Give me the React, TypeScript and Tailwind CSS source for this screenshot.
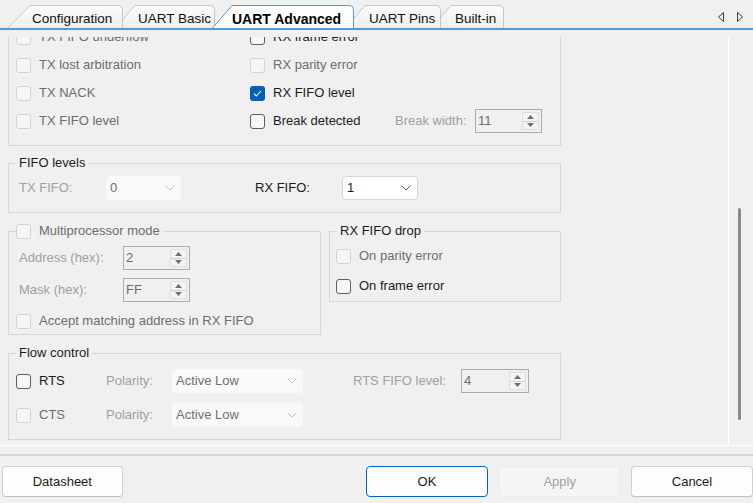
import React from 'react';

type CB = 'on' | 'off' | 'dis';

function Check({ s }: { s: CB }) {
  if (s === 'on') {
    return (
      <span className="flex h-[15px] w-[15px] shrink-0 items-center justify-center rounded-[3px] bg-[#005fb8]">
        <svg width="9" height="7" viewBox="0 0 9 7">
          <path d="M1 3.6 L3.4 6 L8 1" fill="none" stroke="#ffffff" strokeWidth="1.1" />
        </svg>
      </span>
    );
  }
  if (s === 'off') {
    return <span className="h-[15px] w-[15px] shrink-0 rounded-[3px] border border-[#5e5e5e] bg-[#f7f7f7]" />;
  }
  return <span className="h-[15px] w-[15px] shrink-0 rounded-[3px] border border-[#d3d3d3] bg-[#f6f6f6]" />;
}

function CheckLabel({ s, text, cls = '' }: { s: CB; text: string; cls?: string }) {
  return (
    <div className={`flex items-center gap-[8px] ${cls}`}>
      <Check s={s} />
      <span className={s === 'dis' ? 'whitespace-nowrap text-[#6d6d6d]' : 'whitespace-nowrap text-[#1b1b1b]'}>{text}</span>
    </div>
  );
}

function Spin({ v, cls }: { v: string; cls: string }) {
  return (
    <div className={`flex h-[24px] shrink-0 items-stretch border border-[#adadad] ${cls}`}>
      <span className="flex flex-1 items-center pl-[2px] text-[#6d6d6d]">{v}</span>
      <div className="my-[2px] mr-[2px] flex w-[17px] flex-col border border-[#dedede] bg-[#f4f4f4]">
        <div className="flex flex-1 items-center justify-center border-b border-[#d0d0d0]">
          <svg width="7" height="4" viewBox="0 0 7 4">
            <path d="M0 4 L3.5 0 L7 4 Z" fill="#707070" />
          </svg>
        </div>
        <div className="flex flex-1 items-center justify-center">
          <svg width="7" height="4" viewBox="0 0 7 4">
            <path d="M0 0 L3.5 4 L7 0 Z" fill="#707070" />
          </svg>
        </div>
      </div>
    </div>
  );
}

function Combo({ v, cls, enabled }: { v: string; cls: string; enabled?: boolean }) {
  return (
    <div
      className={`flex h-[24px] shrink-0 items-center justify-between rounded-[4px] pl-[4px] pr-[6px] ${
        enabled ? 'border border-[#d6d6d6] bg-white text-[#1b1b1b]' : 'bg-[#f9f9f9] text-[#707070]'
      } ${cls}`}
    >
      <span className="whitespace-nowrap">{v}</span>
      <svg width="10" height="6" viewBox="0 0 10 6">
        <path d="M0.5 0.5 L5 5 L9.5 0.5" fill="none" stroke={enabled ? '#5c5c5c' : '#c4c4c4'} strokeWidth="1" />
      </svg>
    </div>
  );
}

function Tab({
  label,
  w,
  slant,
  cls,
  active,
  id,
}: {
  label: string;
  w: number;
  slant: number;
  cls: string;
  active?: boolean;
  id: string;
}) {
  const h = 23;
  const d = `M0.5 ${h} L${slant} 0.5 L${w - 4.5} 0.5 Q${w - 0.5} 0.5 ${w - 0.5} 4.5 L${w - 0.5} ${h}`;
  return (
    <div className={`relative flex h-[23px] shrink-0 items-center pt-[4px] ${cls}`}>
      <svg className="absolute left-0 top-0" width={w} height={h} viewBox={`0 0 ${w} ${h}`}>
        <defs>
          <linearGradient id={id} x1="0" y1="0" x2="0" y2="1">
            <stop offset="0" stopColor={active ? '#ffffff' : '#fbfbfb'} />
            <stop offset="1" stopColor={active ? '#ffffff' : '#efefef'} />
          </linearGradient>
        </defs>
        <path d={d + ' Z'} fill={`url(#${id})`} stroke="none" />
        <path d={d} fill="none" stroke={active ? '#4a9be2' : '#c6c6c6'} strokeWidth="1" />
      </svg>
      <span
        className={`relative whitespace-nowrap ${active ? 'text-[14px] font-bold text-black' : 'text-[13.5px] text-[#111111]'}`}
      >
        {label}
      </span>
    </div>
  );
}

export default function App() {
  return (
    <div className="relative h-[503px] w-[753px] overflow-hidden bg-[#f0f0f0] font-['Liberation_Sans',Arial,sans-serif] text-[13px] leading-[16px] text-[#1b1b1b]">
      {/* Tab bar */}
      <div className="flex h-[30px] items-end border-b-2 border-[#4a9be2] pl-[7px]">
        <Tab id="t1" label="Configuration" w={116} slant={23} cls="z-[5] w-[116px] pl-[25px]" />
        <Tab id="t2" label="UART Basic" w={100} slant={20} cls="z-[4] -ml-[8px] w-[100px] pl-[23px]" />
        <Tab id="t3" label="UART Advanced" w={142} slant={20} cls="z-[10] -ml-[3px] w-[142px] pl-[20px]" active />
        <Tab id="t4" label="UART Pins" w={96} slant={20} cls="z-[3] -ml-[9px] w-[96px] pl-[24px]" />
        <Tab id="t5" label="Built-in" w={73} slant={20} cls="z-[2] -ml-[10px] w-[73px] pl-[24px]" />
        <div className="mb-[6px] ml-auto flex gap-[13px] pr-[10px]">
          <svg width="6" height="10" viewBox="0 0 6 10">
            <polygon points="5.5,0.5 0.5,5 5.5,9.5" fill="none" stroke="#3a3a3a" strokeWidth="1" />
          </svg>
          <svg width="6" height="10" viewBox="0 0 6 10">
            <polygon points="0.5,0.5 5.5,5 0.5,9.5" fill="none" stroke="#3a3a3a" strokeWidth="1" />
          </svg>
        </div>
      </div>

      {/* Tab page */}
      <div className="flex h-[416px] border-b border-white pt-[7px]">
        <div className="h-full w-[729px] shrink-0 overflow-hidden border-r border-white">
          <div className="-mt-[14px] w-[561px] pl-[8px]">
            {/* Interrupts group (top scrolled away) */}
            <div className="w-[553px] border-x border-b border-[#d6d6d6] pb-[10px] pl-[7px]">
              {[
                ['TX FIFO underflow', 'dis', 'RX frame error', 'off'],
                ['TX lost arbitration', 'dis', 'RX parity error', 'dis'],
                ['TX NACK', 'dis', 'RX FIFO level', 'on'],
                ['TX FIFO level', 'dis', 'Break detected', 'off'],
              ].map(([l, ls, r, rs], i) => (
                <div key={i} className="flex h-[28px] items-center">
                  <CheckLabel s={ls as CB} text={l} cls="w-[234px]" />
                  {i === 3 ? (
                    <div className="flex items-center">
                      <CheckLabel s={rs as CB} text={r} cls="w-[145px]" />
                      <span className="w-[80px] text-[#a0a0a0]">Break width:</span>
                      <Spin v="11" cls="w-[67px]" />
                    </div>
                  ) : (
                    <CheckLabel s={rs as CB} text={r} />
                  )}
                </div>
              ))}
            </div>

            {/* FIFO levels */}
            <fieldset className="mt-[9px] w-[553px] border border-[#d6d6d6] pb-[12px]">
              <legend className="ml-[7px] px-[3px] leading-[16px] text-[#1b1b1b]">FIFO levels</legend>
              <div className="mt-[4px] flex h-[25px] items-center pl-[10px]">
                <span className="w-[87px] text-[#a0a0a0]">TX FIFO:</span>
                <Combo v="0" cls="w-[75px]" />
                <span className="ml-[74px] w-[87px] text-[#1b1b1b]">RX FIFO:</span>
                <Combo v="1" cls="w-[76px]" enabled />
              </div>
            </fieldset>

            {/* Middle row */}
            <div className="mt-[10px] flex items-start">
              <fieldset className="w-[313px] border border-[#d6d6d6] pb-[3px]">
                <legend className="ml-[7px] pr-[3px] leading-[16px]">
                  <span className="flex items-center gap-[8px]">
                    <Check s="dis" />
                    <span className="text-[#6d6d6d]">Multiprocessor mode</span>
                  </span>
                </legend>
                <div className="mt-[7px] flex h-[24px] items-center pl-[10px]">
                  <span className="w-[104px] text-[#a0a0a0]">Address (hex):</span>
                  <Spin v="2" cls="w-[67px]" />
                </div>
                <div className="mt-[8px] flex h-[24px] items-center pl-[10px]">
                  <span className="w-[104px] text-[#a0a0a0]">Mask (hex):</span>
                  <Spin v="FF" cls="w-[67px]" />
                </div>
                <div className="mt-[9px] flex h-[20px] items-center pl-[7px]">
                  <CheckLabel s="dis" text="Accept matching address in RX FIFO" />
                </div>
              </fieldset>

              <fieldset className="ml-[8px] w-[232px] border border-[#d6d6d6] pb-[5px]">
                <legend className="ml-[7px] px-[3px] leading-[16px] text-[#1b1b1b]">RX FIFO drop</legend>
                <div className="mt-[7px] flex h-[20px] items-center pl-[6px]">
                  <CheckLabel s="dis" text="On parity error" />
                </div>
                <div className="mt-[10px] flex h-[20px] items-center pl-[6px]">
                  <CheckLabel s="off" text="On frame error" />
                </div>
              </fieldset>
            </div>

            {/* Flow control */}
            <fieldset className="mt-[10px] w-[553px] border border-[#d6d6d6] pb-[12px]">
              <legend className="ml-[7px] px-[3px] leading-[16px] text-[#1b1b1b]">Flow control</legend>
              <div className="mt-[8px] flex h-[24px] items-center pl-[7px]">
                <Check s="off" />
                <span className="ml-[8px] w-[67px] text-[#1b1b1b]">RTS</span>
                <span className="w-[66px] text-[#a0a0a0]">Polarity:</span>
                <Combo v="Active Low" cls="w-[131px]" />
                <span className="ml-[50px] w-[108px] text-[#a0a0a0]">RTS FIFO level:</span>
                <Spin v="4" cls="w-[68px]" />
              </div>
              <div className="mt-[10px] flex h-[24px] items-center pl-[7px]">
                <Check s="dis" />
                <span className="ml-[8px] w-[67px] text-[#6d6d6d]">CTS</span>
                <span className="w-[66px] text-[#a0a0a0]">Polarity:</span>
                <Combo v="Active Low" cls="w-[131px]" />
              </div>
            </fieldset>
          </div>
        </div>

        {/* Scrollbar */}
        <div className="flex-1 pl-[9px] pt-[171px]">
          <div className="h-[212px] w-[3px] rounded-full bg-[#8a8a8a]" />
        </div>
      </div>

      {/* Button bar */}
      <div className="mt-[8px] border-t-2 border-[#d4d4d4] pt-[10px]">
        <div className="flex pl-[2px]">
          <button className="h-[31px] w-[121px] rounded-[4px] border border-[#d0d0d0] border-b-[#bdbdbd] bg-[#fdfdfd] text-[13px] text-[#1b1b1b]">
            Datasheet
          </button>
          <button className="ml-[243px] h-[31px] w-[123px] rounded-[4px] border border-[#0067c0] bg-[#fdfdfd] text-[13px] text-[#1b1b1b]">
            OK
          </button>
          <button className="ml-[11px] h-[31px] w-[121px] rounded-[4px] border border-[#ececec] bg-[#f5f5f5] text-[13px] text-[#a0a0a0]">
            Apply
          </button>
          <button className="ml-[11px] h-[31px] w-[122px] shrink-0 rounded-[4px] border border-[#d0d0d0] border-b-[#bdbdbd] bg-[#fdfdfd] text-[13px] text-[#1b1b1b]">
            Cancel
          </button>
        </div>
      </div>
    </div>
  );
}
